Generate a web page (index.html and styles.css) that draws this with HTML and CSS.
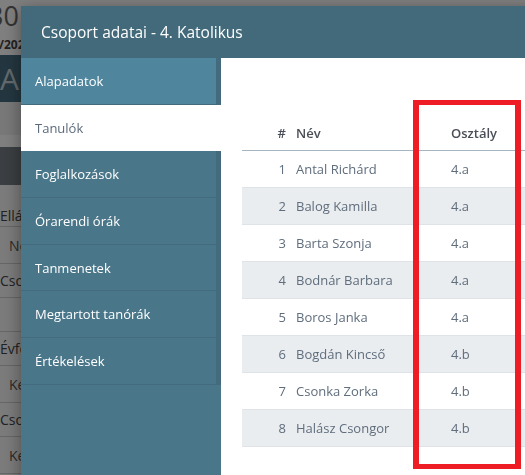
FILE: index.html
```html
<!DOCTYPE html>
<html lang="hu">
<head>
  <meta charset="UTF-8">
  <meta name="viewport" content="width=device-width, initial-scale=1.0">
  <title>Csoport adatai</title>
  <link rel="stylesheet" href="styles.css">
</head>
<body>
  <!-- Page behind the dialog -->
  <div class="page">
    <div class="page-title">30</div>
    <div class="page-sub">/2023</div>
    <div class="page-band">A</div>
    <div class="page-strip"></div>
    <div class="page-head"></div>
    <div class="page-row label tall">Ellátás</div>
    <div class="page-row value">Nem</div>
    <div class="page-row label">Csoport</div>
    <div class="page-row value empty"></div>
    <div class="page-row label">Évfolyam</div>
    <div class="page-row value">Két</div>
    <div class="page-row label">Csoport</div>
    <div class="page-row value">Két</div>
    <div class="page-row label">Terem</div>
  </div>

  <div class="backdrop"></div>

  <!-- Dialog -->
  <div class="modal">
    <div class="modal-header">Csoport adatai - 4. Katolikus</div>
    <div class="modal-body">
      <ul class="side-menu">
        <li class="menu-item hover">Alapadatok</li>
        <li class="menu-item active">Tanulók</li>
        <li class="menu-item">Foglalkozások</li>
        <li class="menu-item">Órarendi órák</li>
        <li class="menu-item">Tanmenetek</li>
        <li class="menu-item">Megtartott tanórák</li>
        <li class="menu-item">Értékelések</li>
      </ul>

      <div class="content">
        <table class="students">
          <thead>
            <tr>
              <th class="num">#</th>
              <th class="name">Név</th>
              <th class="cls">Osztály</th>
            </tr>
          </thead>
          <tbody>
            <tr><td class="num">1</td><td class="name">Antal Richárd</td><td class="cls">4.a</td></tr>
            <tr><td class="num">2</td><td class="name">Balog Kamilla</td><td class="cls">4.a</td></tr>
            <tr><td class="num">3</td><td class="name">Barta Szonja</td><td class="cls">4.a</td></tr>
            <tr><td class="num">4</td><td class="name">Bodnár Barbara</td><td class="cls">4.a</td></tr>
            <tr><td class="num">5</td><td class="name">Boros Janka</td><td class="cls">4.a</td></tr>
            <tr><td class="num">6</td><td class="name">Bogdán Kincső</td><td class="cls">4.b</td></tr>
            <tr><td class="num">7</td><td class="name">Csonka Zorka</td><td class="cls">4.b</td></tr>
            <tr><td class="num">8</td><td class="name">Halász Csongor</td><td class="cls">4.b</td></tr>
          </tbody>
        </table>
      </div>
    </div>
  </div>

  <!-- Annotation frame -->
  <div class="highlight"></div>
</body>
</html>
```

FILE: styles.css
```css
/* General */
html, body {
  margin: 0;
  padding: 0;
  height: 100%;
  overflow: hidden;
}

body {
  font-family: "Open Sans", "Liberation Sans", Arial, sans-serif;
  background-color: #fff;
}

/* Page behind the dialog (only a thin strip shows) */
.page {
  width: 21px;
  overflow: hidden;
  white-space: nowrap;
  color: #555;
}

.page-title {
  height: 36px;
  margin-left: -12px;
  font-size: 27px;
  line-height: 32px;
  color: #666;
}

.page-sub {
  height: 19px;
  margin-left: -1px;
  font-size: 12px;
  font-weight: bold;
  color: #444;
}

.page-band {
  height: 47px;
  background-color: #476d81;
  color: #c6d2d8;
  font-size: 30px;
  line-height: 47px;
  padding-left: 0;
}

.page-strip {
  height: 33px;
  background-color: #f0f0f0;
}

.page-head {
  height: 38px;
  margin-top: 12px;
  background-color: #777d84;
}

.page-row {
  box-sizing: border-box;
  height: 34px;
  border-bottom: 1px solid #ccc;
  background-color: #f7f7f7;
  font-size: 14px;
  display: flex;
  align-items: center;
}

.page-row.tall {
  height: 42px;
  align-items: flex-end;
  padding-bottom: 1px;
}

.page-row.label {
  color: #444;
}

.page-row.value {
  padding-left: 9px;
  height: 37px;
}

.page-row.empty {
  height: 34px;
}

.backdrop {
  position: fixed;
  inset: 0;
  background-color: rgba(0, 0, 0, 0.5);
}

/* Dialog */
.modal {
  position: fixed;
  left: 21px;
  top: 6px;
  width: 600px;
  bottom: -40px;
  background-color: #fff;
  box-shadow: 0 4px 16px rgba(0, 0, 0, 0.4);
  display: flex;
  flex-direction: column;
}

.modal-header {
  height: 52px;
  flex: none;
  background-color: #426a7b;
  color: #fff;
  font-size: 15.5px;
  line-height: 52px;
  padding-left: 20px;
}

.modal-body {
  flex: 1;
  display: flex;
}

/* Side menu */
.side-menu {
  width: 200px;
  flex: none;
  margin: 0;
  padding: 0;
  list-style: none;
  background-color: #4a7689;
}

.menu-item {
  box-sizing: border-box;
  height: 46.7px;
  padding-left: 14px;
  border-right: 5px solid #436b7d;
  border-bottom: 1px solid #436b7d;
  color: #fff;
  font-size: 13px;
  font-weight: 500;
  display: flex;
  align-items: center;
}

.menu-item.hover {
  background-color: #4f869e;
}

.menu-item.active {
  background-color: #fff;
  color: #5c6b7c;
  font-weight: normal;
  border-right: none;
  border-bottom: none;
}

/* Students table */
.content {
  flex: 1;
  padding: 57px 0 0 21px;
}

.students {
  width: 360px;
  border-collapse: collapse;
  font-size: 13px;
  color: #5f6d7c;
}

.students th {
  height: 35px;
  padding: 0;
  text-align: left;
  font-weight: 600;
  color: #4a4f57;
  border-bottom: 1px solid #a7b5c1;
}

.students td {
  height: 36px;
  padding: 0;
  border-bottom: 1px solid #dfe2e6;
}

.students tbody tr:nth-child(even) {
  background-color: #eaedf0;
}

.students .num {
  width: 44px;
  text-align: right;
  padding-right: 10px;
}

.students .name {
  width: 155px;
}

/* Annotation */
.highlight {
  position: fixed;
  left: 413px;
  top: 100px;
  width: 96px;
  height: 359px;
  border-style: solid;
  border-color: #ee1c25;
  border-width: 5px 6px;
}
```
